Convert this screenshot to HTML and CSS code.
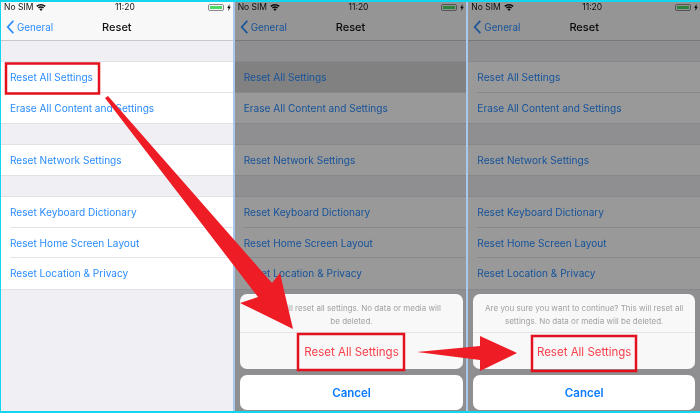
FILE: index.html
```html
<!DOCTYPE html>
<html lang="en">

<head>
  <meta charset="UTF-8">
  <title>Reset</title>
  <link rel="stylesheet" href="styles.css">
</head>

<body>
  <div class="frame">

    <section class="phone">
      <div class="screen">
        <div class="status">
          <span class="carrier">No SIM</span>
          <svg class="wifi" viewBox="0 0 14 10"><path d="M7 10 4.8 7.4a3.4 3.4 0 0 1 4.4 0Zm-3-3.4L2.6 5a6.8 6.8 0 0 1 8.8 0L10 6.6a4.8 4.8 0 0 0-6 0ZM1.8 4.2.3 2.6a10.4 10.4 0 0 1 13.4 0l-1.5 1.6a8.2 8.2 0 0 0-10.4 0Z"/></svg>
          <span class="clock">11:20</span>
          <span class="battery"><i></i></span>
          <svg class="bolt" viewBox="0 0 4 8"><path d="M2.6 0 0 4.6h1.5L1.2 8 4 3.2H2.4Z"/></svg>
        </div>
        <div class="nav">
          <span class="back">
            <svg class="chevron" viewBox="0 0 9 15"><path d="M7.5 1 1.5 7.5l6 6.5"/></svg>
            General
          </span>
          <span class="title">Reset</span>
        </div>
        <div class="group">
          <div class="row">Reset All Settings</div>
          <div class="row">Erase All Content and Settings</div>
        </div>
        <div class="group">
          <div class="row">Reset Network Settings</div>
        </div>
        <div class="group">
          <div class="row">Reset Keyboard Dictionary</div>
          <div class="row">Reset Home Screen Layout</div>
          <div class="row">Reset Location &amp; Privacy</div>
        </div>
      </div>
    </section>

    <section class="phone dimmed">
      <div class="screen">
        <div class="status">
          <span class="carrier">No SIM</span>
          <svg class="wifi" viewBox="0 0 14 10"><path d="M7 10 4.8 7.4a3.4 3.4 0 0 1 4.4 0Zm-3-3.4L2.6 5a6.8 6.8 0 0 1 8.8 0L10 6.6a4.8 4.8 0 0 0-6 0ZM1.8 4.2.3 2.6a10.4 10.4 0 0 1 13.4 0l-1.5 1.6a8.2 8.2 0 0 0-10.4 0Z"/></svg>
          <span class="clock">11:20</span>
          <span class="battery"><i></i></span>
          <svg class="bolt" viewBox="0 0 4 8"><path d="M2.6 0 0 4.6h1.5L1.2 8 4 3.2H2.4Z"/></svg>
        </div>
        <div class="nav">
          <span class="back">
            <svg class="chevron" viewBox="0 0 9 15"><path d="M7.5 1 1.5 7.5l6 6.5"/></svg>
            General
          </span>
          <span class="title">Reset</span>
        </div>
        <div class="group">
          <div class="row pressed">Reset All Settings</div>
          <div class="row">Erase All Content and Settings</div>
        </div>
        <div class="group">
          <div class="row">Reset Network Settings</div>
        </div>
        <div class="group">
          <div class="row">Reset Keyboard Dictionary</div>
          <div class="row">Reset Home Screen Layout</div>
          <div class="row">Reset Location &amp; Privacy</div>
        </div>
      </div>
      <div class="sheet">
        <div class="actions">
          <p class="message">This will reset all settings. No data or media will<br>be deleted.</p>
          <div class="action danger">Reset All Settings</div>
        </div>
        <div class="action cancel">Cancel</div>
      </div>
    </section>

    <section class="phone dimmed">
      <div class="screen">
        <div class="status">
          <span class="carrier">No SIM</span>
          <svg class="wifi" viewBox="0 0 14 10"><path d="M7 10 4.8 7.4a3.4 3.4 0 0 1 4.4 0Zm-3-3.4L2.6 5a6.8 6.8 0 0 1 8.8 0L10 6.6a4.8 4.8 0 0 0-6 0ZM1.8 4.2.3 2.6a10.4 10.4 0 0 1 13.4 0l-1.5 1.6a8.2 8.2 0 0 0-10.4 0Z"/></svg>
          <span class="clock">11:20</span>
          <span class="battery"><i></i></span>
          <svg class="bolt" viewBox="0 0 4 8"><path d="M2.6 0 0 4.6h1.5L1.2 8 4 3.2H2.4Z"/></svg>
        </div>
        <div class="nav">
          <span class="back">
            <svg class="chevron" viewBox="0 0 9 15"><path d="M7.5 1 1.5 7.5l6 6.5"/></svg>
            General
          </span>
          <span class="title">Reset</span>
        </div>
        <div class="group">
          <div class="row">Reset All Settings</div>
          <div class="row">Erase All Content and Settings</div>
        </div>
        <div class="group">
          <div class="row">Reset Network Settings</div>
        </div>
        <div class="group">
          <div class="row">Reset Keyboard Dictionary</div>
          <div class="row">Reset Home Screen Layout</div>
          <div class="row">Reset Location &amp; Privacy</div>
        </div>
      </div>
      <div class="sheet">
        <div class="actions">
          <p class="message">Are you sure you want to continue? This will reset all<br>settings. No data or media will be deleted.</p>
          <div class="action danger">Reset All Settings</div>
        </div>
        <div class="action cancel">Cancel</div>
      </div>
    </section>

    <!-- annotations drawn over the screenshots -->
    <svg class="marks" viewBox="0 0 700 413">
      <path class="arrow" d="M105 98 258 297 240 303 293 329 280 273 272 283 108 96Z"/>
      <path class="arrow" d="M417 352 480 346V336L517 353 480 371V360Z"/>
      <rect class="box" x="6" y="63.5" width="93" height="30"/>
      <rect class="box" x="298" y="334" width="106" height="36"/>
      <rect class="box" x="532" y="336" width="104" height="35"/>
    </svg>
  </div>
</body>

</html>
```

FILE: styles.css
```css
* {
  box-sizing: border-box;
}

body {
  margin: 0;
  width: 700px;
  height: 413px;
  overflow: hidden;
  font-family: Inter, "Liberation Sans", sans-serif;
  background: #fff;
}

.frame {
  position: relative;
  display: flex;
  width: 700px;
  height: 413px;
  border: solid #12d6ee;
  border-width: 2px 0 2px 1px;
}

.phone {
  position: relative;
  flex: 1;
  border-right: 2px solid #a9c8ec;
  overflow: hidden;
}

.phone:last-of-type {
  border-right: 0;
}

.screen {
  height: 100%;
  background: #efeff4;
  filter: blur(0.4px);
}

.dimmed::after {
  content: "";
  position: absolute;
  inset: 0;
  background: rgba(0, 0, 0, 0.4);
}

.status {
  position: relative;
  display: flex;
  align-items: center;
  height: 14px;
  padding: 0 2px 4px 3px;
  background: #f8f8f8;
  font-size: 8.5px;
  color: #111;
}

.wifi {
  width: 10px;
  height: 7px;
  margin-left: 3px;
  fill: #111;
}

.clock {
  position: absolute;
  left: 16px;
  right: 0;
  top: 0;
  text-align: center;
}

.battery {
  display: block;
  width: 16px;
  height: 7px;
  margin-left: auto;
  padding: 1px;
  border: 1px solid #8a8a8a;
  border-radius: 2px;
}

.battery i {
  display: block;
  height: 100%;
  background: #4cd964;
}

.bolt {
  width: 4px;
  height: 7px;
  margin-left: 3px;
  fill: #111;
}

.nav {
  position: relative;
  display: flex;
  align-items: center;
  height: 25px;
  padding-bottom: 2px;
  background: #f8f8f8;
  border-bottom: 1px solid #c8c8cc;
}

.back {
  display: flex;
  align-items: center;
  gap: 2px;
  padding-left: 5px;
  font-size: 9.8px;
  color: #2a8cff;
}

.chevron {
  width: 9px;
  height: 14px;
  fill: none;
  stroke: #2a8cff;
  stroke-width: 1.8;
}

.title {
  position: absolute;
  left: 0;
  right: 0;
  text-align: center;
  font-size: 11px;
  font-weight: 500;
  color: #111;
}

.group {
  margin-top: 20.75px;
  background: #fff;
  border-top: 1px solid #e2e2e6;
  box-shadow: 0 1px #e2e2e6;
}

.nav + .group {
  margin-top: 20px;
}

.row {
  display: flex;
  align-items: center;
  height: 30.5px;
  margin-left: 9px;
  font-size: 10.1px;
  color: #2a8cff;
  box-shadow: inset 0 -1px #e4e4e8;
}

.row:last-child {
  box-shadow: none;
}

.pressed {
  margin-left: 0;
  padding-left: 9px;
  background: #d8d8d8;
}

.sheet {
  position: absolute;
  left: 5px;
  right: 3px;
  bottom: 1px;
  z-index: 1;
  display: flex;
  flex-direction: column;
  gap: 6px;
  filter: blur(0.4px);
}

.phone:last-of-type .sheet {
  right: 5px;
}

.actions {
  background: #f8f8f8;
  border-radius: 7px;
}

.message {
  margin: 0;
  height: 39px;
  padding: 8px 0 0;
  border-bottom: 1px solid #e4e4e4;
  font-size: 8px;
  line-height: 12.5px;
  text-align: center;
  color: #a0a0a0;
}

.action {
  display: flex;
  align-items: center;
  justify-content: center;
  font-size: 11.5px;
}

.danger {
  height: 36px;
  padding-top: 2px;
  color: #f8404a;
}

.cancel {
  height: 35px;
  font-weight: 600;
  color: #0a7aff;
  background: #fff;
  border-radius: 7px;
}

.marks {
  position: absolute;
  left: -1px;
  top: -2px;
  z-index: 2;
  width: 700px;
  height: 413px;
}

.arrow {
  fill: #ee1c25;
}

.box {
  fill: none;
  stroke: #e3101e;
  stroke-width: 2.5;
}
```
